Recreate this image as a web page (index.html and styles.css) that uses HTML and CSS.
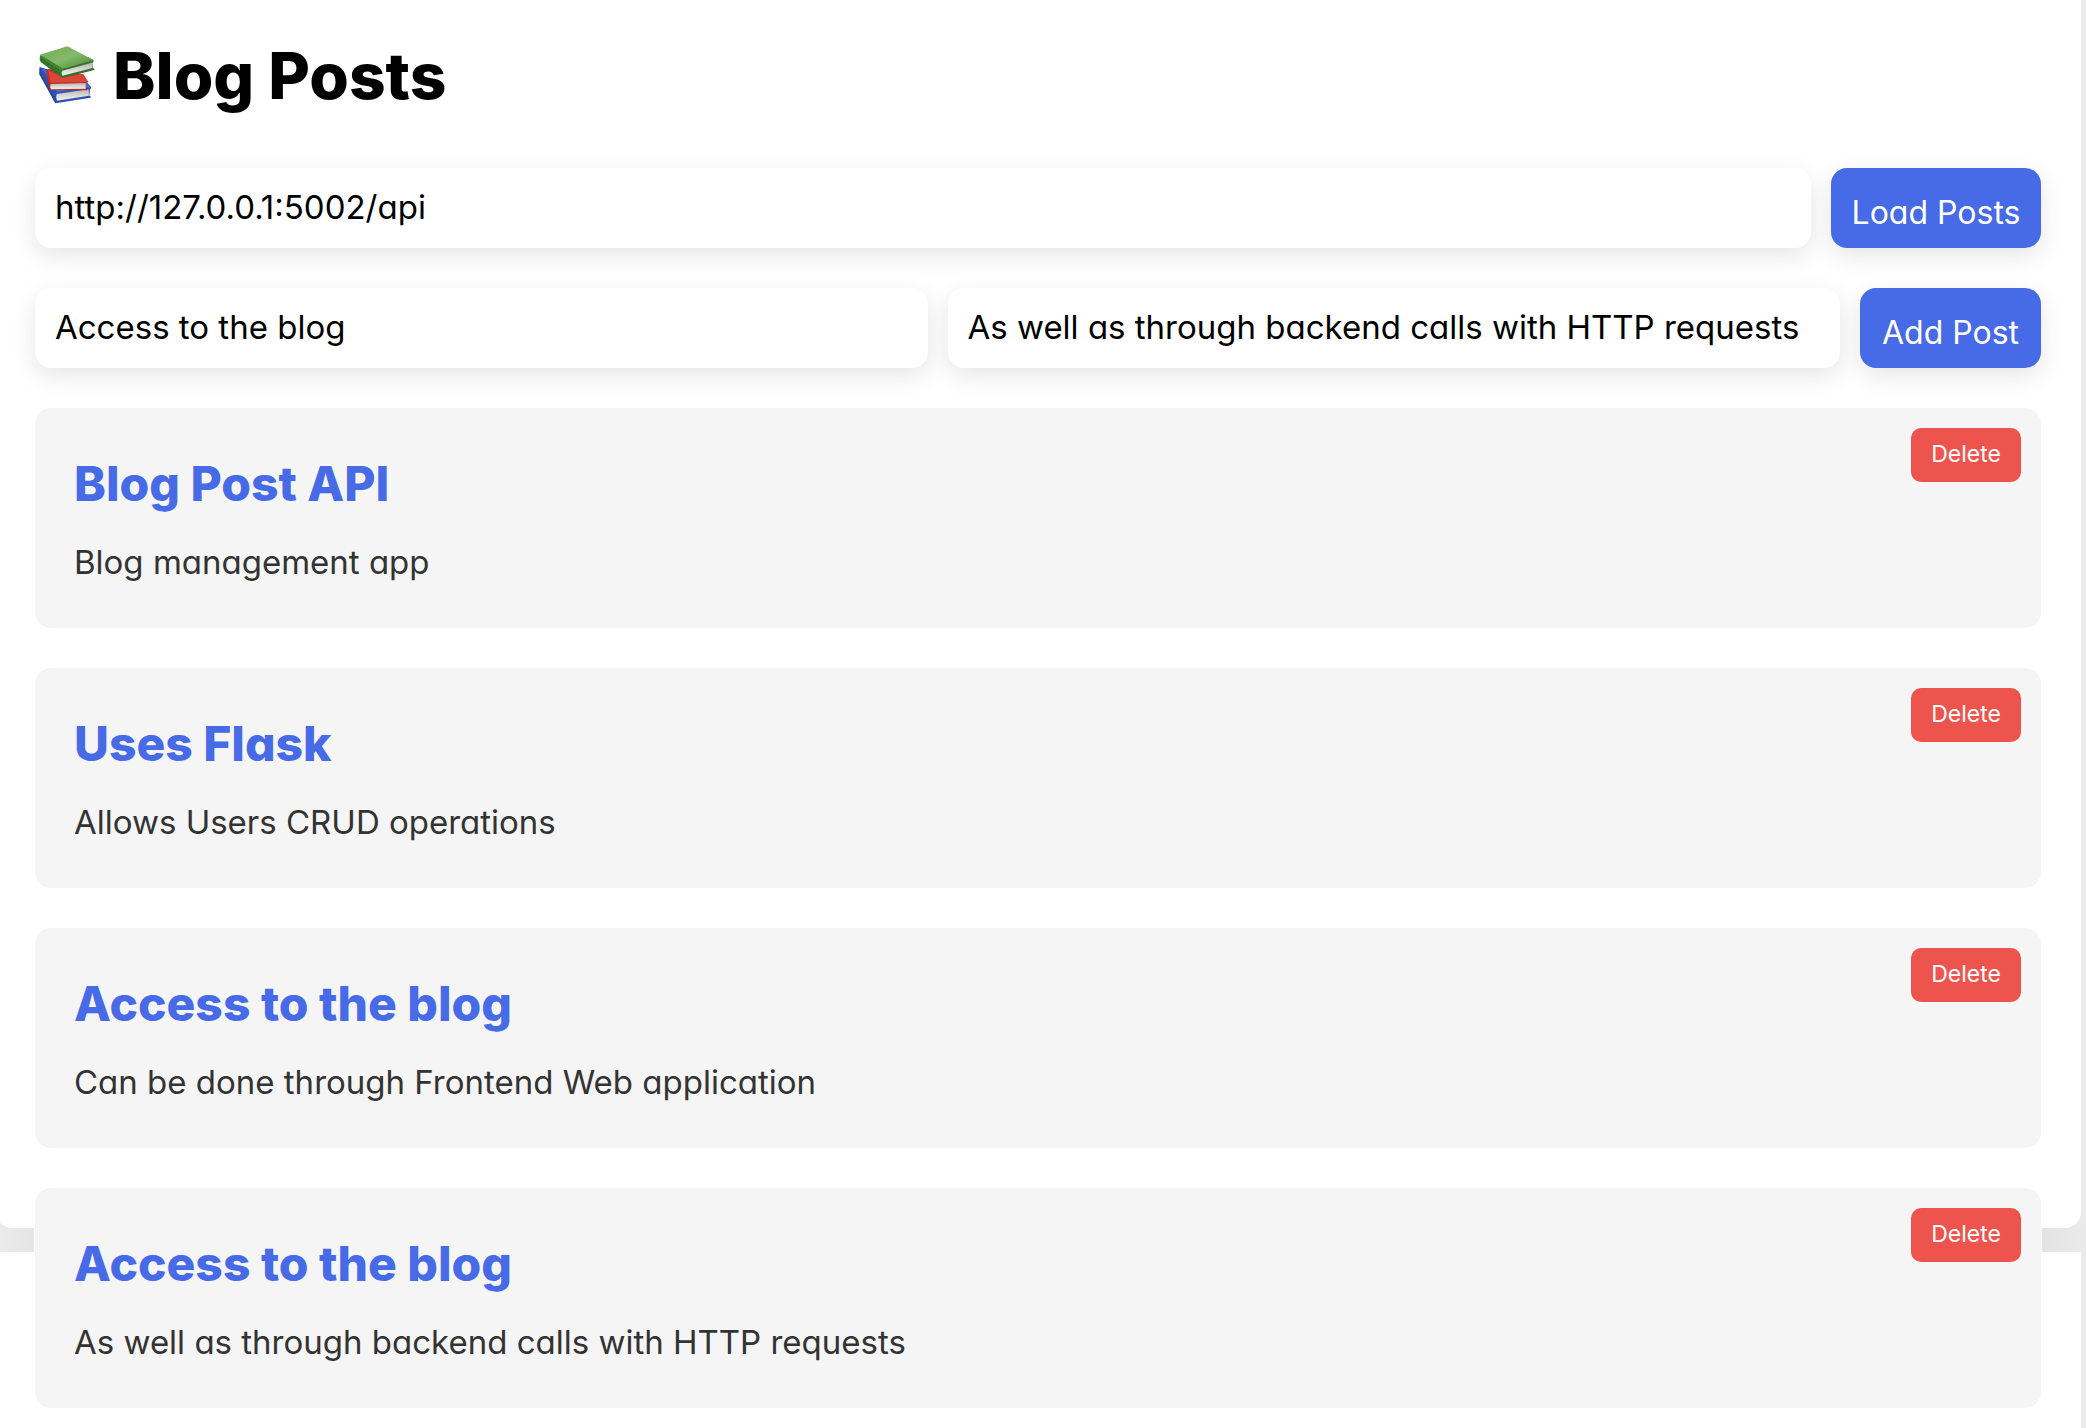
FILE: index.html
```html
<!DOCTYPE html>
<html lang="en">
<head>
<meta charset="utf-8">
<meta name="viewport" content="width=device-width, initial-scale=1">
<title>Blog Posts</title>
<link rel="stylesheet" href="styles.css">
</head>
<body>
<div class="page">
  <div class="backdrop"><div class="sheet"></div></div>
  <main class="container">
    <h1 class="title">
      <svg class="books" viewBox="24 24 171 177" aria-hidden="true">
        <defs>
          <linearGradient id="green" x1="0" y1="0" x2="1" y2="1">
            <stop offset="0" stop-color="#6fa955"/><stop offset=".5" stop-color="#86b96c"/><stop offset="1" stop-color="#43872f"/>
          </linearGradient>
          <linearGradient id="pages" x1="0" y1="0" x2="0" y2="1">
            <stop offset="0" stop-color="#b5b5b3"/><stop offset="1" stop-color="#f5f5f3"/>
          </linearGradient>
        </defs>
        <path fill="#2d4fae" d="M29 90Q25 100 30 110L76 199L182 182V178L178 176L180 157L184 153L172 138L50 96Z"/>
        <path fill="#4969cc" d="M35 94L82 166L184 151L170 136L55 100Z"/>
        <path fill="url(#pages)" d="M80 171L176 157L177 176L81 191Q76 182 80 171Z"/>
        <path fill="#23408f" d="M28 101L76 190L78 199L74 195L28 112Z"/>
        <path fill="#bd2c20" d="M51 98Q47 104 50 113L59 159L171 160L172 156L168 154V138L175 136L160 112L60 96Z"/>
        <path fill="#dc4537" d="M54 100L62 137L175 135L158 110L100 120Z"/>
        <path fill="url(#pages)" d="M62 141L167 138V155L63 157Q59 149 62 141Z"/>
        <path fill="#32742a" d="M30 56Q27 65 32 75L97 123L193 99V95L188 92L187 78L192 71L175 61L60 62Z"/>
        <path fill="url(#green)" d="M30 53L112 28L192 70L98 95Z"/>
        <path fill="#3f862e" d="M30 53L98 95L96 104L31 61Z"/>
        <path fill="url(#pages)" d="M97 101L186 77L187 93L97 116Q92 108 97 101Z"/>
      </svg>
      <span>Blog Posts</span>
    </h1>
    <form class="row">
      <input class="field" type="text" aria-label="API base URL" value="http://127.0.0.1:5002/api">
      <button class="action action-load" type="button">Load Posts</button>
    </form>
    <form class="row">
      <input class="field" type="text" aria-label="Post title" value="Access to the blog">
      <input class="field" type="text" aria-label="Post content" value="As well as through backend calls with HTTP requests">
      <button class="action action-add" type="button">Add Post</button>
    </form>
    <section class="posts">
      <article class="post">
        <div class="post-text"><h2>Blog Post API</h2><p>Blog management app</p></div>
        <button class="delete" type="button">Delete</button>
      </article>
      <article class="post">
        <div class="post-text"><h2>Uses Flask</h2><p>Allows Users CRUD operations</p></div>
        <button class="delete" type="button">Delete</button>
      </article>
      <article class="post">
        <div class="post-text"><h2>Access to the blog</h2><p>Can be done through Frontend Web application</p></div>
        <button class="delete" type="button">Delete</button>
      </article>
      <article class="post">
        <div class="post-text"><h2>Access to the blog</h2><p>As well as through backend calls with HTTP requests</p></div>
        <button class="delete" type="button">Delete</button>
      </article>
    </section>
  </main>
</div>
</body>
</html>
```
FILE: styles.css
```css
* {
  box-sizing: border-box;
}

html {
  background: #eaeaea;
}

body {
  margin: 0;
  font-family: Inter, "Open Sans", sans-serif;
  font-feature-settings: "cv11";
  font-size: 33px;
  color: #000;
}

.page {
  display: grid;
  min-height: 100vh;
  margin-right: 5px;
  background: #fff;
}

.backdrop,
.container {
  grid-area: 1 / 1;
  min-width: 0;
}

.backdrop {
  align-self: start;
  height: calc(86vh + 24px);
  margin-right: -5px;
  padding-right: 5px;
  background: linear-gradient(to right, #ebebeb, #e2e2e2 48px, #e2e2e2 calc(100% - 48px), #ebebeb);
}

.sheet {
  height: 86vh;
  margin-left: -4px;
  background: #fff;
  border-radius: 0 0 16px 16px;
}

.container {
  padding: 32px 40px 20px 35px;
}

.title {
  display: flex;
  align-items: center;
  gap: 18px;
  height: 88px;
  margin: 0 0 48px;
  padding-left: 3px;
  font-size: 64px;
  font-weight: 800;
  line-height: 88px;
}

.books {
  width: 57px;
  height: 59px;
  margin-bottom: 4px;
}

.row {
  display: flex;
  gap: 20px;
  margin-bottom: 40px;
}

.field,
.action {
  height: 80px;
  padding: 0 20px 2px;
  border: 0;
  border-radius: 16px;
  font: inherit;
  font-feature-settings: inherit;
  box-shadow: 0 8px 24px rgba(0, 0, 0, 0.1);
}

.field {
  flex: 1 1 0;
  min-width: 0;
  background: #fff;
  color: #000;
}

.action {
  padding: 8px 0 0;
  background: #476ae6;
  color: #fff;
  font-size: 32px;
}

.action-load {
  width: 210px;
}

.action-add {
  width: 181px;
}

.posts {
  display: grid;
  gap: 40px;
}

.post {
  display: flex;
  justify-content: space-between;
  align-items: flex-start;
  min-height: 220px;
  padding: 20px 20px 20px 39px;
  background: #f5f5f5;
  border-radius: 16px;
  box-shadow: 0 0 0 1px #fff;
}

.post-text {
  padding-top: 20px;
}

.post h2 {
  margin: 0 0 18px;
  font-size: 48px;
  font-weight: 800;
  line-height: 72px;
  color: #476ae6;
}

.post p {
  margin: 0;
  line-height: 48px;
  color: #333;
}

.delete {
  width: 110px;
  height: 54px;
  padding: 0 0 2px;
  border: 0;
  border-radius: 10px;
  background: #ee544e;
  color: #fff;
  font: inherit;
  font-feature-settings: inherit;
  font-size: 23px;
}
```
